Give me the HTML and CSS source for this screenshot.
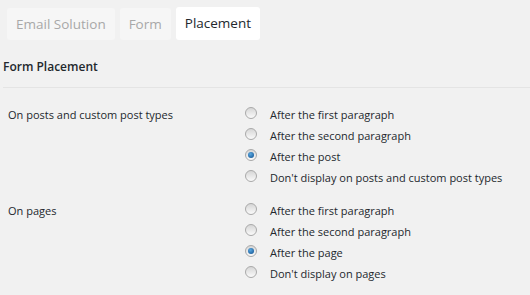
FILE: index.html
```html
<!DOCTYPE html>
<html lang="en">
<head>
    <meta charset="UTF-8">
    <title>Form Placement</title>
    <link rel="stylesheet" href="styles.css">
</head>
<body>
    <div class="tabs">
        <a class="tab">Email Solution</a>
        <a class="tab">Form</a>
        <a class="tab active">Placement</a>
    </div>

    <h2 class="section-title">Form Placement</h2>

    <div class="settings">
        <div class="row">
            <div class="label">On posts and custom post types</div>
            <div class="options">
                <label class="option"><span class="radio"></span>After the first paragraph</label>
                <label class="option"><span class="radio"></span>After the second paragraph</label>
                <label class="option"><span class="radio checked"></span>After the post</label>
                <label class="option"><span class="radio"></span>Don't display on posts and custom post types</label>
            </div>
        </div>
        <div class="row">
            <div class="label">On pages</div>
            <div class="options">
                <label class="option"><span class="radio"></span>After the first paragraph</label>
                <label class="option"><span class="radio"></span>After the second paragraph</label>
                <label class="option"><span class="radio checked"></span>After the page</label>
                <label class="option"><span class="radio"></span>Don't display on pages</label>
            </div>
        </div>
    </div>
</body>
</html>
```

FILE: styles.css
```css
body {
    margin: 0;
    background-color: #f1f1f1;
    font-family: "Open Sans", sans-serif;
    color: #23282d;
    font-size: 11px;
}
.tabs {
    display: flex;
    gap: 5px;
    padding: 8px 0 0 7px;
}
.tab {
    display: block;
    height: 32px;
    line-height: 32px;
    padding: 0 9px;
    font-size: 13.5px;
    color: #a8a8a8;
    background-color: #f6f6f6;
    border-radius: 3px;
}
.tab.active {
    color: #23282d;
    background-color: #fff;
    height: 33px;
    margin-top: -1px;
}
.section-title {
    margin: 19px 0 0 3px;
    padding-bottom: 12px;
    font-size: 12px;
    line-height: 16px;
    font-weight: 600;
    border-bottom: 1px solid #e4e4e4;
}
.settings {
    padding: 16px 0 0 8px;
}
.row {
    display: flex;
    margin-bottom: 12px;
}
.label {
    width: 237px;
    line-height: 21px;
}
.options {
    display: flex;
    flex-direction: column;
}
.option {
    display: flex;
    align-items: center;
    height: 21px;
}
.radio {
    width: 10px;
    height: 10px;
    border: 1px solid #a9a9a9;
    border-radius: 50%;
    background: linear-gradient(#d6d6d6, #fafafa);
    margin: -3px 13px 0 0;
    position: relative;
    box-sizing: content-box;
}
.radio.checked::after {
    content: "";
    position: absolute;
    left: 2px;
    top: 2px;
    width: 6px;
    height: 6px;
    border-radius: 50%;
    background: radial-gradient(circle at 40% 35%, #5aa8e0, #0b4c8c);
}
```
